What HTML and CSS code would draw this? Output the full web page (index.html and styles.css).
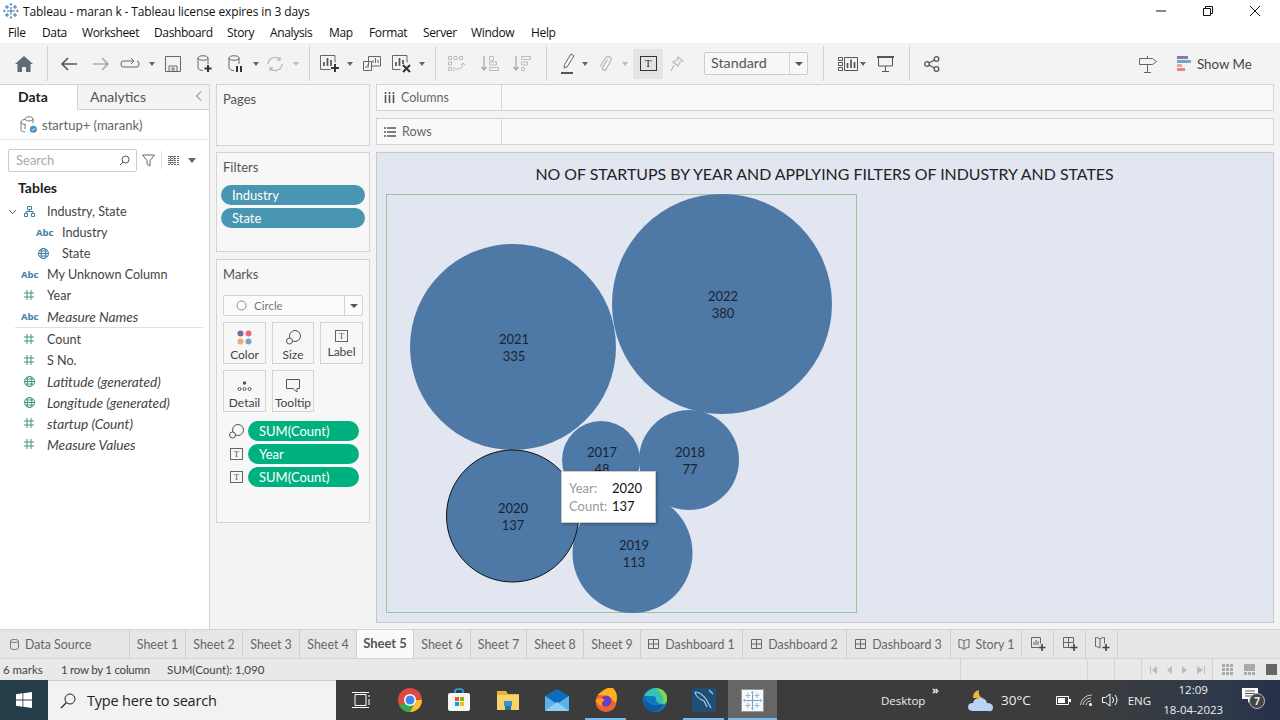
FILE: index.html
```html
<!DOCTYPE html>
<html lang="en">
<head>
<meta charset="utf-8">
<title>Tableau - maran k</title>
<link rel="stylesheet" href="styles.css">
</head>
<body>
<div class="app">
  <header class="titlebar">
    <svg class="applogo" width="16" height="16" viewBox="0 0 16 16"><g stroke="#3f78ad" fill="none"><path d="M8 4v8M4 8h8"/><path d="M4 2v4M2 4h4M12 2v4M10 4h4M4 10v4M2 12h4M12 10v4M10 12h4"/><path d="M8 0v3M6.500 1.500h3M8 13v3M6.500 14.500h3M0 8h3M1.500 6.500v3M13 8h3M14.500 6.500v3" stroke-dasharray="1 .5"/></g></svg>
    <span class="apptitle">Tableau - maran k - Tableau license expires in 3 days</span>
    <div class="winctl">
      <svg width="12" height="12" viewBox="0 0 12 12"><path d="M1 6h10" stroke="#111" fill="none"/></svg>
      <svg width="12" height="12" viewBox="0 0 12 12"><path d="M3.500 3V1.500h7v7H9M1.500 3.500h7v7h-7z" stroke="#111" fill="none"/></svg>
      <svg width="12" height="12" viewBox="0 0 12 12"><path d="M1 1l10 10M11 1L1 11" stroke="#111" fill="none"/></svg>
    </div>
  </header>
  <nav class="menubar">
    <span>File</span><span>Data</span><span>Worksheet</span><span>Dashboard</span><span>Story</span><span>Analysis</span><span>Map</span><span>Format</span><span>Server</span><span>Window</span><span>Help</span>
  </nav>
  <div class="toolbar">
    <div class="tool"><svg width="18" height="16" viewBox="0 0 18 16"><path d="M9 0L0 8h2.500v8h4.500v-5h4v5h4.500V8H18z" fill="#5f6b78"/></svg></div>
    <div class="sep"></div>
    <div class="tool"><svg width="18" height="16" viewBox="0 0 18 16"><path d="M17 8H2M8 2L2 8l6 6" fill="none" stroke="#555" stroke-width="1.600"/></svg></div>
    <div class="tool"><svg width="18" height="16" viewBox="0 0 18 16"><path d="M1 8h15M10 2l6 6-6 6" fill="none" stroke="#aaa" stroke-width="1.600"/></svg></div>
    <div class="tool"><svg width="20" height="14" viewBox="0 0 20 14"><path d="M13 4H3Q1 4 1 7t2 3h14q2 0 2-3t-2-3M11 1l3 3-3 3" fill="none" stroke="#666"/></svg></div>
    <div class="tool"><i class="caret"></i></div>
    <div class="tool"><svg width="16" height="16" viewBox="0 0 16 16"><path d="M.5.5h15v15H.5zM4 15.500V10h8v5.500M7 12h2v3.500H7z" fill="none" stroke="#666"/></svg></div>
    <div class="tool"><svg width="16" height="18" viewBox="0 0 16 18"><path d="M1 3c0-3 10-3 10 0v6M1 3c0 3 10 3 10 0M1 3v10c0 1.500 3 2.500 5 2.500" fill="none" stroke="#666"/><path d="M11 10v7M7.500 13.500h7" stroke="#333" stroke-width="2"/></svg></div>
    <div class="tool"><svg width="16" height="18" viewBox="0 0 16 18"><path d="M1 3c0-3 10-3 10 0v6M1 3c0 3 10 3 10 0M1 3v10c0 1.500 3 2.500 5 2.500" fill="none" stroke="#666"/><path d="M9 11v6M13 11v6" stroke="#333" stroke-width="2"/></svg></div>
    <div class="tool"><i class="caret"></i></div>
    <div class="tool"><svg width="18" height="16" viewBox="0 0 18 16"><path d="M2 8a7 7 0 0 1 12-4.500M16 8a7 7 0 0 1-12 4.500M14 1v3h-3M4 15v-3h3" fill="none" stroke="#bbb" stroke-width="1.300"/></svg></div>
    <div class="tool"><i class="caret pale"></i></div>
    <div class="sep"></div>
    <div class="tool"><svg width="22" height="18" viewBox="0 0 22 18"><path d="M15 .5H.5v14h10" fill="none" stroke="#666"/><path d="M15 .5v7" stroke="#666"/><path d="M4 11V7M7.500 11V3M11 11V5" stroke="#555" stroke-width="1.700"/><path d="M15 9v8M11 13h8" stroke="#333" stroke-width="2"/></svg></div>
    <div class="tool"><i class="caret"></i></div>
    <div class="tool"><svg width="18" height="16" viewBox="0 0 18 16"><path d="M5.500 10V.5h12v9.500H9M.5 5.500h8v9h-8z" fill="#f3f3f3" stroke="#666"/><path d="M10 7V4M12.500 7V2M15 7V4M3 12v-2M5 12V8" stroke="#666"/></svg></div>
    <div class="tool"><svg width="20" height="18" viewBox="0 0 20 18"><path d="M15 .5H.5v14h8M15 .5v7" fill="none" stroke="#666"/><path d="M4 11V7M7.500 11V3M11 9V5" stroke="#555" stroke-width="1.700"/><path d="M11 10l7 7M18 10l-7 7" stroke="#333" stroke-width="2"/></svg></div>
    <div class="tool"><i class="caret"></i></div>
    <div class="sep"></div>
    <div class="tool"><svg width="18" height="16" viewBox="0 0 18 16"><path d="M.5.5h3v3h-3zM6 .5h3v3H6zM11.500.5h3v3h-3zM.5 6h3v3h-3zM.5 11.500h3v3h-3zM7 13c5 1 8-2 8-6M13 9l2-2 2 2M6 11v4" fill="none" stroke="#bbb"/></svg></div>
    <div class="tool"><svg width="18" height="16" viewBox="0 0 18 16"><path d="M3 0v14M.5 11L3 14l2.500-3" fill="none" stroke="#aaa" stroke-width="1.300"/><path d="M8.500.5h4v4h-4zM8.500 6h7v3h-7zM8.500 11.500h9v3h-9z" fill="none" stroke="#bbb"/></svg></div>
    <div class="tool"><svg width="18" height="16" viewBox="0 0 18 16"><path d="M3 0v14M.5 11L3 14l2.500-3" fill="none" stroke="#aaa" stroke-width="1.300"/><path d="M8.500.5h9v3h-9zM8.500 6h6v3h-6zM8.500 11.500h3v3h-3z" fill="none" stroke="#bbb"/></svg></div>
    <div class="sep"></div>
    <div class="tool"><svg width="14" height="22" viewBox="0 0 14 22"><path d="M10 1l3 2-7 11-3 1 .5-3.500z" fill="none" stroke="#666"/><path d="M0 20h12" stroke="#555" stroke-width="2"/></svg></div>
    <div class="tool"><i class="caret"></i></div>
    <div class="tool"><svg width="15" height="17" viewBox="0 0 15 17"><path d="M9.500 4.500L4.500 12.500a2 2 0 0 0 3.400 2L12.800 6a3 3 0 0 0-5.200-3L2 11.500" fill="none" stroke="#b4b4b4" stroke-width="1.200"/></svg></div>
    <div class="tool"><i class="caret pale"></i></div>
    <div class="tool active"><span class="tbox">T</span></div>
    <div class="tool"><svg width="14" height="16" viewBox="0 0 14 16"><path d="M8 1l5 4-3 1-2 4-5-4 4-2zM4 9l-3 6" fill="none" stroke="#bbb" stroke-width="1.200"/></svg></div>
    <div class="tool standard"><span>Standard</span><b><i class="caret dark"></i></b></div>
    <div class="sep"></div>
    <div class="tool"><svg width="20" height="14" viewBox="0 0 20 14"><path d="M.5.5h4v3h-4zM.5 5.500h4v3h-4zM.5 10.500h4v3h-4zM6.500.5h13v13h-13z" fill="none" stroke="#555"/><path d="M9.500 11V6M13 11V2.500M16.500 11V5" stroke="#555" stroke-width="1.700"/></svg></div>
    <div class="tool"><i class="caret"></i></div>
    <div class="tool"><svg width="17" height="16" viewBox="0 0 17 16"><path d="M0 1h17" stroke="#555" stroke-width="2"/><path d="M1.500 1v9h14V1M8.500 10v5M5 15.500h7" fill="none" stroke="#555"/></svg></div>
    <div class="sep"></div>
    <div class="tool"><svg width="16" height="16" viewBox="0 0 16 16"><g fill="none" stroke="#555" stroke-width="1.300"><circle cx="3" cy="8" r="2.300"/><circle cx="12.500" cy="3" r="2.300"/><circle cx="12.500" cy="13" r="2.300"/><path d="M5 7l5.500-3M5 9l5.500 3"/></g></svg></div>
    <div class="tool-fill"></div>
    <div class="tool guide"><svg width="18" height="18" viewBox="0 0 18 18"><path d="M.5 3.500h13l4 3-4 3H.5zM8.500 9.500V17M5 17.500h7M8.500 3.500V1" fill="none" stroke="#666"/></svg></div>
    <div class="showme">
      <svg width="14" height="15" viewBox="0 0 14 15"><rect width="11" height="3" fill="#8a7aa0"/><rect y="4" width="14" height="3" fill="#7ca0cb"/><rect y="8" width="5" height="3" fill="#f0a878"/><rect y="12" width="8" height="3" fill="#f08088"/></svg>
      <span>Show Me</span>
    </div>
  </div>
  <main class="workspace">
    <aside class="datapane">
      <div class="panetabs">
        <div class="ptab on">Data</div>
        <div class="ptab off"><span>Analytics</span><svg width="7" height="10" viewBox="0 0 7 10"><path d="M6 .5L1.500 5 6 9.500" fill="none" stroke="#666"/></svg></div>
      </div>
      <div class="source">
        <svg width="17" height="17" viewBox="0 0 17 17"><path d="M5 3c0-3 8-3 8 0v4M5 3c0 2.500 8 2.500 8 0M1 6c0-2 3-2.500 4-2.500M1 6v8c0 1 2 2 4 2M1 6c0 2 3 2.500 5 2.500M5 8.500V13" fill="none" stroke="#777"/><circle cx="13.300" cy="13.300" r="3.500" fill="#4a90c0"/><path d="M11.800 13.300l1 1 2-2" fill="none" stroke="#fff"/></svg>
        <span>startup+ (marank)</span>
      </div>
      <div class="searchrow">
        <div class="search"><span>Search</span><svg width="11" height="11" viewBox="0 0 11 11"><circle cx="6.500" cy="4.500" r="3.500" fill="none" stroke="#555"/><path d="M4 7L1 10" stroke="#555"/></svg></div>
        <svg width="13" height="13" viewBox="0 0 13 13"><path d="M.5 1h12L8 6.500V12L5 10V6.500z" fill="none" stroke="#666"/></svg>
        <i class="vline"></i>
        <svg class="gridic" width="12" height="9" viewBox="0 0 12 9"><path d="M0 .5h12M0 2.500h12M0 4.500h12M0 6.500h12M0 8.500h12M2.500 0v9M6 0v9" stroke="#666" stroke-dasharray="2 1" fill="none"/></svg>
        <i class="caret big"></i>
      </div>
      <h2 class="tables">Tables</h2>
      <ul class="fields">
        <li><svg class="chev" width="9" height="6" viewBox="0 0 9 6"><path d="M1 1l3.500 3.500L8 1" fill="none" stroke="#666"/></svg><svg class="fi" width="11" height="11" viewBox="0 0 11 11"><path d="M3.500.5h4v3h-4zM.5 7.500h3v3h-3zM7.500 7.500h3v3h-3zM5.500 3.500v2M2 7.500v-2h7v2" fill="none" stroke="#3d7ea6"/></svg><span>Industry, State</span></li>
        <li class="sub"><b class="abc">Abc</b><span>Industry</span></li>
        <li class="sub"><svg class="fi" width="11" height="11" viewBox="0 0 11 11"><g fill="none" stroke="#3d7ea6"><circle cx="5.500" cy="5.500" r="5"/><ellipse cx="5.500" cy="5.500" rx="2.300" ry="5"/><path d="M.5 5.500h10M1.300 3h8.400M1.300 8h8.400"/></g></svg><span>State</span></li>
        <li><b class="abc">Abc</b><span>My Unknown Column</span></li>
        <li><svg class="fi" width="10" height="10" viewBox="0 0 10 10"><path d="M3 0v10M7 0v10M0 3h10M0 7h10" stroke="#3f9a78" fill="none"/></svg><span>Year</span></li>
        <li class="divided"><b class="abc">Abc</b><em>Measure Names</em></li>
        <li><svg class="fi" width="10" height="10" viewBox="0 0 10 10"><path d="M3 0v10M7 0v10M0 3h10M0 7h10" stroke="#3f9a78" fill="none"/></svg><span>Count</span></li>
        <li><svg class="fi" width="10" height="10" viewBox="0 0 10 10"><path d="M3 0v10M7 0v10M0 3h10M0 7h10" stroke="#3f9a78" fill="none"/></svg><span>S No.</span></li>
        <li><svg class="fi" width="11" height="11" viewBox="0 0 11 11"><g fill="none" stroke="#3f9a78"><circle cx="5.500" cy="5.500" r="5"/><ellipse cx="5.500" cy="5.500" rx="2.300" ry="5"/><path d="M.5 5.500h10M1.300 3h8.400M1.300 8h8.400"/></g></svg><em>Latitude (generated)</em></li>
        <li><svg class="fi" width="11" height="11" viewBox="0 0 11 11"><g fill="none" stroke="#3f9a78"><circle cx="5.500" cy="5.500" r="5"/><ellipse cx="5.500" cy="5.500" rx="2.300" ry="5"/><path d="M.5 5.500h10M1.300 3h8.400M1.300 8h8.400"/></g></svg><em>Longitude (generated)</em></li>
        <li><svg class="fi" width="10" height="10" viewBox="0 0 10 10"><path d="M3 0v10M7 0v10M0 3h10M0 7h10" stroke="#3f9a78" fill="none"/></svg><em>startup (Count)</em></li>
        <li><svg class="fi" width="10" height="10" viewBox="0 0 10 10"><path d="M3 0v10M7 0v10M0 3h10M0 7h10" stroke="#3f9a78" fill="none"/></svg><em>Measure Values</em></li>
      </ul>
    </aside>
    <section class="cards">
      <div class="card pages"><h3>Pages</h3></div>
      <div class="card filters">
        <h3>Filters</h3>
        <div class="pill blue">Industry</div>
        <div class="pill blue">State</div>
      </div>
      <div class="card marks">
        <h3>Marks</h3>
        <div class="marktype"><svg width="11" height="11" viewBox="0 0 11 11"><circle cx="5.500" cy="5.500" r="4.500" fill="#fff" stroke="#888"/></svg><span>Circle</span><b><i class="caret dark"></i></b></div>
        <div class="markgrid">
          <div class="mbtn"><svg width="15" height="15" viewBox="0 0 15 15"><circle cx="3.500" cy="3.500" r="3" fill="#7a6a9a"/><circle cx="11.500" cy="3.500" r="3" fill="#ee6677"/><circle cx="3.500" cy="11.500" r="3" fill="#f0a878"/><circle cx="11.500" cy="11.500" r="3" fill="#7ca0cb"/></svg><span>Color</span></div>
          <div class="mbtn"><svg width="15" height="15" viewBox="0 0 15 15"><g fill="none" stroke="#555"><circle cx="9" cy="6" r="5.500"/><circle cx="3.500" cy="11" r="3" fill="#f7f7f7"/></g></svg><span>Size</span></div>
          <div class="mbtn"><span class="tbox sm">T</span><span>Label</span></div>
          <div class="mbtn"><svg width="15" height="15" viewBox="0 0 15 15"><circle cx="7.500" cy="5" r="1.700" fill="#555"/><g fill="none" stroke="#555"><circle cx="2.500" cy="11" r="1.500"/><circle cx="7.500" cy="11" r="1.500"/><circle cx="12.500" cy="11" r="1.500"/></g></svg><span>Detail</span></div>
          <div class="mbtn"><svg width="15" height="15" viewBox="0 0 15 15"><path d="M.5 1.500h13v9H11V14l-4-3.500H.5z" fill="none" stroke="#555"/></svg><span>Tooltip</span></div>
        </div>
        <div class="shelf"><svg width="15" height="15" viewBox="0 0 15 15"><g fill="none" stroke="#555"><circle cx="9" cy="6" r="5.500"/><circle cx="3.500" cy="11" r="3" fill="#f7f7f7"/></g></svg><div class="pill green">SUM(Count)</div></div>
        <div class="shelf"><span class="tbox sm">T</span><div class="pill green">Year</div></div>
        <div class="shelf"><span class="tbox sm">T</span><div class="pill green">SUM(Count)</div></div>
      </div>
    </section>
    <section class="sheet">
      <div class="shelfbar">
        <div class="shelfname"><svg width="11" height="11" viewBox="0 0 11 11"><path d="M1.500 0v2M1.500 3v8M5.500 0v2M5.500 3v8M9.500 0v2M9.500 3v8" stroke="#555" stroke-width="1.600"/></svg><span>Columns</span></div>
      </div>
      <div class="shelfbar">
        <div class="shelfname"><svg width="12" height="10" viewBox="0 0 12 10"><path d="M0 1h2M3 1h9M0 5h2M3 5h9M0 9h2M3 9h9" stroke="#555" stroke-width="1.400"/></svg><span>Rows</span></div>
      </div>
      <div class="viz">
        <h1>NO OF STARTUPS BY YEAR AND APPLYING FILTERS OF INDUSTRY AND STATES</h1>
        <svg class="chart" width="896" height="469" viewBox="377 153 896 469">
          <rect x="386.500" y="194.500" width="470" height="418" fill="none" stroke="#9cc49a"/>
          <g fill="#4e79a7">
            <circle cx="601" cy="460" r="39"/>
            <circle cx="722" cy="304" r="110"/>
            <circle cx="513" cy="347" r="103"/>
            <circle cx="689" cy="460" r="50"/>
            <circle cx="632.500" cy="553" r="60"/>
            <circle cx="512.500" cy="516" r="66" stroke="#111"/>
          </g>
          <g class="ml" text-anchor="middle">
            <text x="723" y="301">2022</text><text x="723" y="318">380</text>
            <text x="514" y="344">2021</text><text x="514" y="361">335</text>
            <text x="602" y="457">2017</text><text x="602" y="474">48</text>
            <text x="690" y="457">2018</text><text x="690" y="474">77</text>
            <text x="513" y="513">2020</text><text x="513" y="530">137</text>
            <text x="634" y="550">2019</text><text x="634" y="567">113</text>
          </g>
        </svg>
        <div class="tip">
          <span class="k">Year:</span><span class="v">2020</span>
          <span class="k">Count:</span><span class="v">137</span>
        </div>
      </div>
    </section>
  </main>
  <div class="tabs">
    <div class="tab t130"><svg width="9" height="11" viewBox="0 0 9 11"><path d="M.5 2c0-2 8-2 8 0v7c0 2-8 2-8 0zM.5 2c0 2 8 2 8 0" fill="none" stroke="#777"/></svg><span>Data Source</span></div>
    <div class="tab">Sheet 1</div><div class="tab">Sheet 2</div><div class="tab">Sheet 3</div><div class="tab">Sheet 4</div>
    <div class="tab cur">Sheet 5</div>
    <div class="tab">Sheet 6</div><div class="tab">Sheet 7</div><div class="tab">Sheet 8</div><div class="tab">Sheet 9</div>
    <div class="tab dash"><svg width="11" height="10" viewBox="0 0 11 10"><path d="M.5.5h10v9H.5zM5.500.5v9M.5 5h10" fill="none" stroke="#666"/></svg><span>Dashboard 1</span></div>
    <div class="tab dash"><svg width="11" height="10" viewBox="0 0 11 10"><path d="M.5.5h10v9H.5zM5.500.5v9M.5 5h10" fill="none" stroke="#666"/></svg><span>Dashboard 2</span></div>
    <div class="tab dash"><svg width="11" height="10" viewBox="0 0 11 10"><path d="M.5.5h10v9H.5zM5.500.5v9M.5 5h10" fill="none" stroke="#666"/></svg><span>Dashboard 3</span></div>
    <div class="tab story"><svg width="12" height="11" viewBox="0 0 12 11"><path d="M6 2C5 1 3 .5 1 .5v8c2 0 4 .5 5 2 1-1.500 3-2 5-2v-8C9 .5 7 1 6 2zv8.500" fill="none" stroke="#666"/></svg><span>Story 1</span></div>
    <div class="tab add"><svg width="16" height="15" viewBox="0 0 16 15"><path d="M9 .5H.5v10H7M9.500.5v6" fill="none" stroke="#666"/><path d="M3 8V5M5 8V3M7 8V4" stroke="#666"/><path d="M11 7v7M7.500 10.500h7" stroke="#444" stroke-width="1.600"/></svg></div>
    <div class="tab add"><svg width="16" height="15" viewBox="0 0 16 15"><path d="M9 10.500H.5V.5h10v6M5.500.5v10M.5 5.500h10" fill="none" stroke="#666"/><path d="M11 7v7M7.500 10.500h7" stroke="#444" stroke-width="1.600"/></svg></div>
    <div class="tab add"><svg width="16" height="15" viewBox="0 0 16 15"><path d="M5 2C4 1 2 .5.500.5v9c1.500 0 3 .5 4.500 1.500V2C6 1 8 .5 9.500.5v6" fill="none" stroke="#666"/><path d="M11 7v7M7.500 10.500h7" stroke="#444" stroke-width="1.600"/></svg></div>
    <div class="tab-rest"></div>
  </div>
  <div class="status">
    <span class="st1">6 marks</span><span class="st2">1 row by 1 column</span><span class="st3">SUM(Count): 1,090</span>
    <div class="st-fill"></div>
    <div class="stc w127"></div><div class="stc w27"></div><div class="stc w27"></div>
    <div class="stc pager">
      <svg width="8" height="8" viewBox="0 0 8 8"><path d="M0 0h1v8H0zM7 0v8L2 4z" fill="#bbb"/></svg>
      <svg width="6" height="8" viewBox="0 0 6 8"><path d="M5 0v8L0 4z" fill="#bbb"/></svg>
      <svg width="6" height="8" viewBox="0 0 6 8"><path d="M0 0v8l5-4z" fill="#bbb"/></svg>
      <svg width="8" height="8" viewBox="0 0 8 8"><path d="M7 0h1v8H7zM0 0v8l6-4z" fill="#bbb"/></svg>
    </div>
    <div class="stc fit">
      <svg width="11" height="11" viewBox="0 0 11 11"><path d="M0 1.500h11M0 5.500h11M0 9.500h11" stroke="#aaa" stroke-width="3" stroke-dasharray="3 1"/></svg>
      <svg width="11" height="11" viewBox="0 0 11 11"><rect width="11" height="7" fill="#aaa"/><path d="M0 9.500h11" stroke="#aaa" stroke-width="3" stroke-dasharray="3 1"/></svg>
      <svg width="11" height="11" viewBox="0 0 11 11"><rect width="11" height="11" fill="#666"/></svg>
    </div>
  </div>
  <footer class="taskbar">
    <div class="start"><svg width="16" height="16" viewBox="0 0 16 16"><path d="M0 2.200l6.500-.9v6.300H0zM7.300 1.200L16 0v7.600H7.300zM0 8.400h6.500v6.300L0 13.800zM7.300 8.400H16V16l-8.700-1.200z" fill="#fff"/></svg></div>
    <div class="tsearch"><svg width="16" height="16" viewBox="0 0 16 16"><circle cx="10" cy="6" r="5" fill="none" stroke="#222"/><path d="M6.500 9.500L1 15" stroke="#222" stroke-width="1.300"/></svg><span>Type here to search</span></div>
    <div class="apps">
      <div class="app-i"><svg width="18" height="16" viewBox="0 0 18 16"><path d="M3 2.500h11v11H3zM0 .5h17M0 15.500h17M17 3v2M17 7v6" fill="none" stroke="#fff"/></svg></div>
      <div class="app-i"><svg width="24" height="24" viewBox="0 0 24 24"><circle cx="12" cy="12" r="12" fill="#dd4b3e"/><path d="M12 12l-6.500 10A12 12 0 0 0 24 12z" fill="#fbc02d"/><path d="M1.600 18A12 12 0 0 0 12 24l5-9-5-3z" fill="#34a853"/><circle cx="12" cy="12" r="6" fill="#fff"/><circle cx="12" cy="12" r="4.500" fill="#4285f4"/></svg></div>
      <div class="app-i"><svg width="24" height="24" viewBox="0 0 24 24"><path d="M8 6V3q0-2 4-2t4 2v3" fill="none" stroke="#29b6f6" stroke-width="1.500"/><rect x="1" y="5" width="22" height="18" rx="2" fill="#f5f5f5"/><rect x="8" y="9" width="4" height="4" fill="#f25022"/><rect x="13" y="9" width="4" height="4" fill="#7fba00"/><rect x="8" y="14" width="4" height="4" fill="#00a4ef"/><rect x="13" y="14" width="4" height="4" fill="#ffb900"/></svg></div>
      <div class="app-i"><svg width="22" height="20" viewBox="0 0 22 20"><path d="M0 1h9l2 3h11v16H0z" fill="#e8b33d"/><rect y="5" width="22" height="15" fill="#f6d469"/><rect x="7" y="11" width="8" height="5" fill="#3a8fd0"/><rect x="8" y="16" width="6" height="4" fill="#2f6fa8"/></svg></div>
      <div class="app-i"><svg width="24" height="22" viewBox="0 0 24 22"><path d="M0 7L12 0l12 7v15H0z" fill="#0f6cbd"/><path d="M0 7l12 8 12-8v15H0z" fill="#5ab3e8"/><path d="M0 22l12-9 12 9z" fill="#8fd0f2"/></svg></div>
      <div class="app-i line"><svg width="24" height="24" viewBox="0 0 24 24"><circle cx="12" cy="13.500" r="10.500" fill="#f2622e"/><path d="M4 7q8-9 15-7 6 6 3 15l-8-7z" fill="#ffb01f"/><circle cx="12" cy="13" r="5.500" fill="#6b3fc4"/><path d="M1.500 12q6-4 9 0-4 3-2 6-5-1-7-6z" fill="#ff9a1f"/></svg></div>
      <div class="app-i"><svg width="24" height="24" viewBox="0 0 24 24"><circle cx="12" cy="12" r="12" fill="#0f79c6"/><path d="M1 8Q6 0 13 0q11 1 11 11 0 5-4 5-7 0-7-5 0-3-3-3-5 0-9 0z" fill="#37c2b1"/><path d="M20 16q-2 7-10 8Q0 22 1 8q2 8 9 9 6 1 10-1z" fill="#0c59a4"/><path d="M13 0q11 1 11 11 0 5-4 5 2-8-7-16z" fill="#7bd650"/></svg></div>
      <div class="app-i line"><svg width="24" height="24" viewBox="0 0 24 24"><rect width="24" height="24" rx="2" fill="#1d4f78"/><path d="M3 4c5 0 8 3 11 7l5 9M3 4c1 5 4 7 9 9l3 6M17 2l4 4" fill="none" stroke="#b8c9d8" stroke-width="1.200"/></svg></div>
      <div class="app-i line cur"><svg width="23" height="23" viewBox="0 0 23 23"><rect x=".5" y=".5" width="22" height="22" fill="#f8f8f8" stroke="#999"/><g stroke="#8fb7d8"><path d="M11.500 5v13M5 11.500h13" stroke="#6a9dc8"/><path d="M7 4v5M4.500 6.500h5M16 4v5M13.500 6.500h5M7 14v5M4.500 16.500h5M16 14v5M13.500 16.500h5M11.500 2v3M10 3.500h3M11.500 18v3M10 19.500h3M2 11.500h3M3.500 10v3M18 11.500h3M19.500 10v3"/></g></svg></div>
    </div>
    <div class="tray">
      <div class="desk"><span>Desktop</span><b>&raquo;</b></div>
      <svg class="wx" width="25" height="23" viewBox="0 0 25 23"><path d="M5 9a7 7 0 0 1 6-8 6 6 0 0 0 4 8z" fill="#f3b23a"/><path d="M5 22q-5 0-5-4t5-4q1-5 7-5t7 5q6 0 6 4.500T20 22z" fill="#b8d4f2"/></svg>
      <span class="temp">30°C</span>
      <svg width="15" height="9" viewBox="0 0 15 9"><path d="M.5.5h12v8H.5z" fill="none" stroke="#fff"/><rect x="2" y="2" width="7" height="5" fill="#fff"/><rect x="13" y="3" width="2" height="3" fill="#fff"/></svg>
      <svg class="wifi" width="14" height="12" viewBox="0 0 14 12"><g fill="none" stroke="#ccc"><path d="M.5 11A11 11 0 0 1 12 1M3 11a8 8 0 0 1 8-7M6 11a5 5 0 0 1 5-4"/></g><circle cx="10.500" cy="10.500" r="1.500" fill="#fff"/></svg>
      <svg class="vol" width="17" height="14" viewBox="0 0 17 14"><path d="M.5 4.500h3L8 1v12L3.500 9.500h-3zM10.500 4a5 5 0 0 1 0 6M13 2a8 8 0 0 1 0 10" fill="none" stroke="#fff"/></svg>
      <span class="lang">ENG</span>
      <div class="clock"><span>12:09</span><span>18-04-2023</span></div>
      <div class="notif"><svg width="16" height="15" viewBox="0 0 16 15"><path d="M0 0h16v11h-7l-3 4v-4H0z" fill="#fff"/><path d="M3 3h10M3 5.500h10M3 8h7" stroke="#555"/></svg><span class="count">7</span></div>
    </div>
  </footer>
</div>
</body>
</html>
```
FILE: styles.css
```css
* { box-sizing: border-box; }
html, body { margin: 0; padding: 0; }
body { width: 1280px; height: 720px; overflow: hidden; background: #fff; font-family: Lato, "Open Sans", sans-serif; font-size: 13px; color: #555; }
h1, h2, h3, ul { margin: 0; padding: 0; font-weight: normal; }
.app { display: flex; flex-direction: column; width: 1280px; height: 720px; }

.titlebar { height: 22px; flex: none; display: flex; align-items: center; padding: 0 8px 0 3px; background: #fff; }
.applogo { flex: none; }
.apptitle { margin-left: 4px; font: 12px "Open Sans", sans-serif; color: #111; letter-spacing: -.12px; }
.winctl { margin-left: auto; display: flex; gap: 35px; padding-right: 11px; }
.menubar { height: 21px; flex: none; display: grid; grid-template-columns: 34px 40px 72px 73px 43px 59px 40px 54px 48px 60px auto; padding-left: 8px; align-items: center; font: 12px "Open Sans", sans-serif; color: #111; letter-spacing: -.35px; }

.toolbar { height: 41px; flex: none; background: #f3f3f3; display: grid; align-items: center;
  grid-template-columns: 47px 1px 42px 22px 36px 8px 34px 30px 32px 8px 30px 12px 14px 30px 8px 36px 24px 16px 10px 34px 32px 32px 16px 28px 6px 34px 6px 40px 18px 122px 30px 20px 10px 34px 14px 32px 1fr 40px 112px; }
.tool { display: flex; justify-content: center; align-items: center; height: 30px; min-width: 0; }
.sep { justify-self: center; width: 1px; height: 35px; background: #d4d4d4; }
.caret { display: block; flex: none; width: 0; height: 0; border: 3px solid transparent; border-top: 4px solid #666; border-bottom: 0; }
.caret.pale { border-top-color: #bbb; }
.caret.dark { border-left-width: 4px; border-right-width: 4px; border-top-width: 4px; border-top-color: #555; }
.caret.big { border-left-width: 4px; border-right-width: 4px; border-top-width: 5px; border-top-color: #666; }
.tool.active { background: #e4e4e4; width: 30px; justify-self: center; }
.tbox { display: block; width: 17px; height: 15px; border: 1px solid #333; font: 11px/13px "Liberation Serif", serif; text-align: center; color: #333; }
.tbox.sm { width: 13px; height: 12px; border: 1px solid #666; font-size: 9px; line-height: 10px; color: #555; flex: none; }
.standard { justify-content: flex-start; width: 104px; height: 23px; justify-self: end; background: #f7f7f7; border: 1px solid #ccc; border-radius: 2px; font-size: 14.300px; line-height: 19px; color: #555; padding-left: 6px; }
.standard span { flex: 1; padding-bottom: 2px; }
.standard b { width: 18px; height: 21px; border-left: 1px solid #d4d4d4; display: flex; align-items: center; justify-content: center; }
.showme { display: flex; align-items: center; gap: 6px; font-size: 13.300px; color: #444; padding-left: 9px; }

.workspace { flex: 1; min-height: 0; display: flex; background: #f3f3f3; }
.datapane { width: 210px; flex: none; background: #fff; border-right: 1px solid #d4d4d4; }
.panetabs { height: 26px; display: flex; border-top: 1px solid #d4d4d4; }
.ptab { display: flex; align-items: center; font-size: 14px; padding-bottom: 2px; }
.ptab.on { width: 78px; padding-left: 18px; color: #222; font-weight: 700; border-right: 1px solid #d4d4d4; }
.ptab.off { flex: 1; justify-content: space-between; padding: 0 7px 2px 12px; background: #f3f3f3; border-bottom: 1px solid #d4d4d4; color: #555; }
.source { height: 30px; display: flex; align-items: center; gap: 5px; padding-left: 20px; border-bottom: 1px solid #e6e6e6; color: #666; font-size: 13px; }
.searchrow { display: flex; align-items: center; height: 24px; margin-top: 8px; padding-left: 8px; gap: 5px; }
.search { width: 129px; height: 23px; display: flex; align-items: center; justify-content: space-between; padding: 0 6px 0 7px; border: 1px solid #ccc; border-radius: 2px; color: #aaa; flex: none; }
.vline { width: 1px; height: 18px; background: #ddd; margin-left: 1px; }
.gridic { margin: 0 3px 0 1px; }
.tables { font-size: 14px; font-weight: 700; color: #222; padding: 7px 0 0 18px; line-height: 17px; }
.fields { list-style: none; margin-top: 5px; }
.fields li { height: 21px; display: flex; align-items: center; position: relative; padding-left: 47px; color: #444; font-size: 12.600px; }
.fields em { font-style: italic; font-size: 13.700px; }
.fields .sub { padding-left: 62px; }
.fields .fi { position: absolute; left: 24px; top: 5px; }
.fields .sub .fi { left: 38px; }
.fields .chev { position: absolute; left: 8px; top: 8px; }
.abc { position: absolute; left: 21px; top: 4px; font: 700 9.500px/14px "Open Sans", sans-serif; color: #3d7ea6; }
.fields .sub .abc { left: 36px; }
.divided { margin-bottom: 2px; }
.divided::after { content: ""; position: absolute; left: 15px; right: 6px; bottom: -1px; height: 1px; background: #e0e0e0; }

.cards { width: 166px; flex: none; padding: 0 6px 0 6px; display: flex; flex-direction: column; }
.card { background: #f7f7f7; border: 1px solid #d4d4d4; padding: 6px 4px 0 6px; }
.card h3 { font-size: 13px; line-height: 16px; color: #555; }
.pages { height: 62px; }
.filters { height: 100px; margin-top: 6px; }
.filters h3 { margin-bottom: 10px; }
.marks { height: 264px; margin-top: 7px; }
.marks h3 { margin-bottom: 13px; }
.pill { height: 20px; border-radius: 10px; color: #fff; font-size: 13px; line-height: 20px; padding-left: 11px; }
.pill.blue { background: #4996b2; margin: 0 0 3px -2px; }
.pill.green { background: #00b180; flex: 1; }
.marktype { width: 140px; height: 21px; display: flex; align-items: center; gap: 7px; padding-left: 12px; border: 1px solid #d4d4d4; border-radius: 2px; background: #fbfbfb; font-size: 11.500px; color: #777; }
.marktype span { flex: 1; }
.marktype b { width: 18px; height: 19px; border-left: 1px solid #d4d4d4; display: flex; align-items: center; justify-content: center; }
.markgrid { display: grid; grid-template-columns: 43px 42px 43px; gap: 6px; margin-top: 6px; width: 140px; }
.mbtn { height: 42px; display: flex; flex-direction: column; align-items: center; gap: 3px; padding-top: 7px; border: 1px solid #d4d4d4; font-size: 12px; line-height: 14px; color: #444; white-space: nowrap; }
.shelf { display: flex; align-items: center; gap: 4px; width: 136px; height: 20px; margin-top: 3px; padding-left: 7px; }
.markgrid + .shelf { margin-top: 9px; }
.shelf svg { margin-left: -1px; }
.shelf .tbox { margin-right: 1px; }

.sheet { flex: 1; min-width: 0; padding-right: 6px; display: flex; flex-direction: column; }
.shelfbar { height: 27px; background: #f9f9f9; border: 1px solid #d4d4d4; margin-bottom: 7px; flex: none; }
.shelfname { width: 125px; height: 25px; display: flex; align-items: center; gap: 6px; padding-left: 7px; border-right: 1px solid #d4d4d4; font-size: 12.500px; color: #666; }
.viz { position: relative; height: 471px; flex: none; background: #e2e6f0; border: 1px solid #c8c8c8; }
.viz h1 { position: absolute; left: 0; right: 0; top: 12px; text-align: center; font-size: 15.900px; line-height: 18px; color: #222; font-weight: 400; z-index: 1; padding-right: 1px; }
.chart { display: block; }
.ml { font: 13px Lato, sans-serif; fill: #1a2430; }
.tip { position: absolute; left: 184px; top: 318px; width: 95px; height: 52px; padding: 9px 0 0 7px; background: #fff; border: 1px solid #ccc; box-shadow: 1px 1px 3px rgba(0,0,0,.35); display: grid; grid-template-columns: 43px auto; align-content: start; row-gap: 3px; font-size: 13px; line-height: 15px; }
.tip .k { color: #999; }
.tip .v { color: #111; }

.tabs { height: 30px; flex: none; display: grid; grid-template-columns: 130px 56px 57px 57px 57px 57px 57px 56px 57px 57px 102px 104px 104px 71px 32px 32px 32px 1fr; background: #e6e6e6; border-top: 1px solid #d4d4d4; border-bottom: 1px solid #d4d4d4; }
.tab { display: flex; align-items: center; justify-content: center; gap: 6px; border-right: 1px solid #d0d0d0; color: #666; font-size: 12.400px; white-space: nowrap; }
.tab.t130 { justify-content: flex-start; padding-left: 10px; }
.tab.cur { background: #fafafa; color: #555; font-size: 13px; font-weight: 700; padding-bottom: 3px; }
.tab.add { padding-left: 3px; }
.status { height: 21px; flex: none; display: flex; align-items: center; background: #e9e9e9; color: #444; font-size: 11.500px; }
.st1 { margin-left: 3px; width: 58px; }
.st2 { width: 106px; letter-spacing: -.25px; }
.st-fill { flex: 1; }
.stc { height: 100%; border-left: 1px solid #d4d4d4; flex: none; display: flex; align-items: center; }
.w127 { width: 127px; }
.w27 { width: 27px; }
.pager { width: 71px; gap: 9px; padding-left: 8px; }
.fit { width: 68px; gap: 11px; padding-left: 9px; }

.taskbar { height: 40px; flex: none; display: flex; align-items: center; background: linear-gradient(90deg, #3c3c3c 85%, #2f3a4a 95%, #26304a 100%); color: #fff; }
.start { width: 48px; height: 100%; display: flex; align-items: center; justify-content: center; background: #243d48; }
.tsearch { width: 288px; height: 100%; display: flex; align-items: center; gap: 11px; padding-left: 12px; background: #f2f2f2; border-top: 1px solid #ccc; color: #222; font: 14.500px "Open Sans", sans-serif; letter-spacing: -.2px; }
.apps { display: grid; grid-template-columns: repeat(9, 49px); height: 100%; flex: none; }
.app-i { display: flex; align-items: center; justify-content: center; height: 100%; position: relative; }
.app-i.line::after { content: ""; position: absolute; left: 4px; right: 4px; bottom: 0; height: 2px; background: #76b9ed; }
.app-i.cur { background: #666; }
.app-i.cur::after { left: 0; right: 0; }
.tray { flex: 1; display: flex; align-items: center; font: 11.500px "Open Sans", sans-serif; color: #eee; }
.desk { margin-left: 104px; position: relative; width: 87px; }
.desk b { position: absolute; left: 51px; top: -11px; font-size: 11px; }
.wx { margin-right: 8px; }
.temp { font-size: 13.500px; margin-right: 25px; }
.wifi { margin-left: 9px; }
.vol { margin-left: 8px; }
.lang { margin-left: 9px; }
.clock { display: flex; flex-direction: column; align-items: center; margin-left: 12px; line-height: 20px; }
.notif { position: relative; margin-left: 19px; height: 24px; width: 24px; }
.count { position: absolute; left: 7px; top: 5px; width: 16px; height: 16px; border: 1px solid #bbb; border-radius: 50%; background: #444; font-size: 10px; font-weight: 700; line-height: 14px; text-align: center; }
```
